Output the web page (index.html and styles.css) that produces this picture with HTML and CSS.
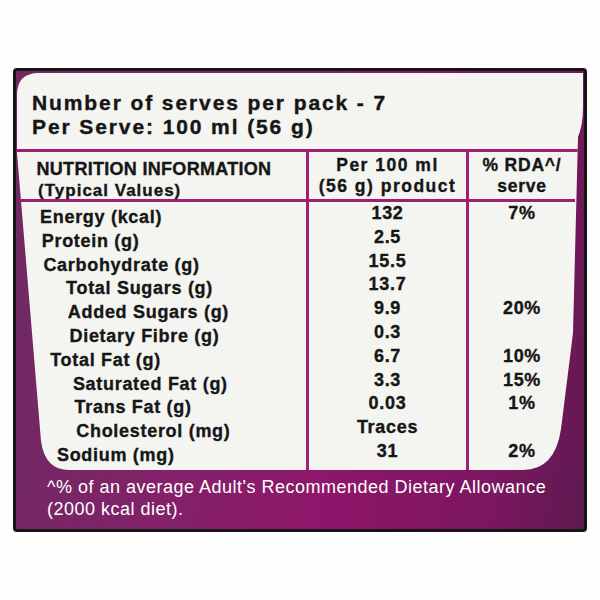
FILE: index.html
```html
<!DOCTYPE html>
<html lang="en">
<head>
  <meta charset="UTF-8" />
  <meta name="viewport" content="width=device-width, initial-scale=1.0"/>
  <title>Nutrition Information</title>
  <link rel="stylesheet" href="styles.css">
</head>
<body>

<div class="label">
  <div class="panel">
    <div class="serves">
      <div>Number of serves per pack - 7</div>
      <div>Per Serve: 100 ml (56 g)</div>
    </div>

    <div class="table">
      <div class="col names">
        <span class="slant"></span>
        <div class="head">
          <div class="title">NUTRITION INFORMATION</div>
          <div class="subtitle">(Typical Values)</div>
        </div>
        <div class="rows">
          <div>Energy (kcal)</div>
          <div>Protein (g)</div>
          <div>Carbohydrate (g)</div>
          <div class="in">Total Sugars (g)</div>
          <div class="in">Added Sugars (g)</div>
          <div class="in">Dietary Fibre (g)</div>
          <div>Total Fat (g)</div>
          <div class="in">Saturated Fat (g)</div>
          <div class="in">Trans Fat (g)</div>
          <div class="in">Cholesterol (mg)</div>
          <div>Sodium (mg)</div>
        </div>
      </div>

      <div class="col amounts">
        <div class="head">Per 100 ml<br>(56 g) product</div>
        <div class="rows">
          <div>132</div>
          <div>2.5</div>
          <div>15.5</div>
          <div>13.7</div>
          <div>9.9</div>
          <div>0.3</div>
          <div>6.7</div>
          <div>3.3</div>
          <div>0.03</div>
          <div>Traces</div>
          <div>31</div>
        </div>
      </div>

      <div class="col rda">
        <div class="head">% RDA^/<br>serve</div>
        <div class="rows">
          <div>7%</div>
          <div></div>
          <div></div>
          <div></div>
          <div>20%</div>
          <div></div>
          <div>10%</div>
          <div>15%</div>
          <div>1%</div>
          <div></div>
          <div>2%</div>
        </div>
      </div>
    </div>
  </div>

  <p class="note">^% of an average Adult's Recommended Dietary Allowance<br>(2000 kcal diet).</p>
</div>

</body>
</html>
```

FILE: styles.css
```css
* {
  box-sizing: border-box;
}
body {
  margin: 0;
  background: #fefefe;
  font-family: 'Liberation Sans', Arial, sans-serif;
  color: #161616;
}

.label {
  width: 574px;
  height: 464px;
  margin: 68px 0 0 13px;
  border: 3px solid #161616;
  border-radius: 4px;
  background: linear-gradient(100deg, #6c2b61 0%, #83216a 35%, #8e166a 60%, #7b1660 85%, #5e1a4f 100%);
  overflow: hidden;
}

/* white sheet, slightly narrower at the bottom like the printed tub */
.panel {
  display: flex;
  flex-direction: column;
  width: 566px;
  height: 397px;
  margin: 2px 0 0 1px;
  background: #f4f5f1;
  clip-path: path("M22 0 H566 V34 Q566 52 561 64 L556 260 L544 356 Q538 397 506 397 H52 Q28 397 24 368 L0 80 V22 Q0 0 22 0 Z");
}

.serves {
  padding: 18px 0 10px 15px;
  font-size: 21px;
  line-height: 24px;
  font-weight: bold;
  letter-spacing: 1.9px;
  -webkit-text-stroke: 0.4px #161616;
}

.table {
  flex: 1;
  display: flex;
  border-top: 3px solid #a01f70;
}

.col {
  font-weight: bold;
  -webkit-text-stroke: 0.35px #161616;
}

.head {
  height: 50px;
  border-bottom: 3px solid #a01f70;
}

.rows div {
  height: 23.8px;
  font-size: 18px;
  line-height: 23.8px;
  white-space: nowrap;
}

.names {
  width: 289px;
  flex: none;
}

.slant {
  float: left;
  width: 42px;
  height: 316px;
  shape-outside: polygon(0 0, 17.5px 0, 40px 316px, 0 316px);
}

.names .head {
  padding-top: 6px;
  line-height: 22px;
}

.names .title {
  font-size: 18px;
  letter-spacing: 0.3px;
}

.names .subtitle {
  font-size: 17px;
  letter-spacing: 1px;
}

.names .rows {
  padding-top: 4px;
  letter-spacing: 0.7px;
}

.names .rows .in {
  text-indent: 21px;
}

.amounts,
.rda {
  border-left: 3px solid #a01f70;
  text-align: center;
}

.amounts {
  width: 160px;
  flex: none;
}

.rda {
  flex: 1;
  padding-right: 8px;
}

.amounts .head,
.rda .head {
  padding-top: 3px;
  font-size: 17.5px;
  line-height: 21px;
  letter-spacing: 1.5px;
}

.rda .head {
  letter-spacing: 0.8px;
}

.amounts .rows,
.rda .rows {
  letter-spacing: 0.7px;
}

.note {
  margin: 6px 0 0 31px;
  color: #fff;
  font-size: 18px;
  line-height: 22px;
  letter-spacing: 0.5px;
  white-space: nowrap;
}
```
